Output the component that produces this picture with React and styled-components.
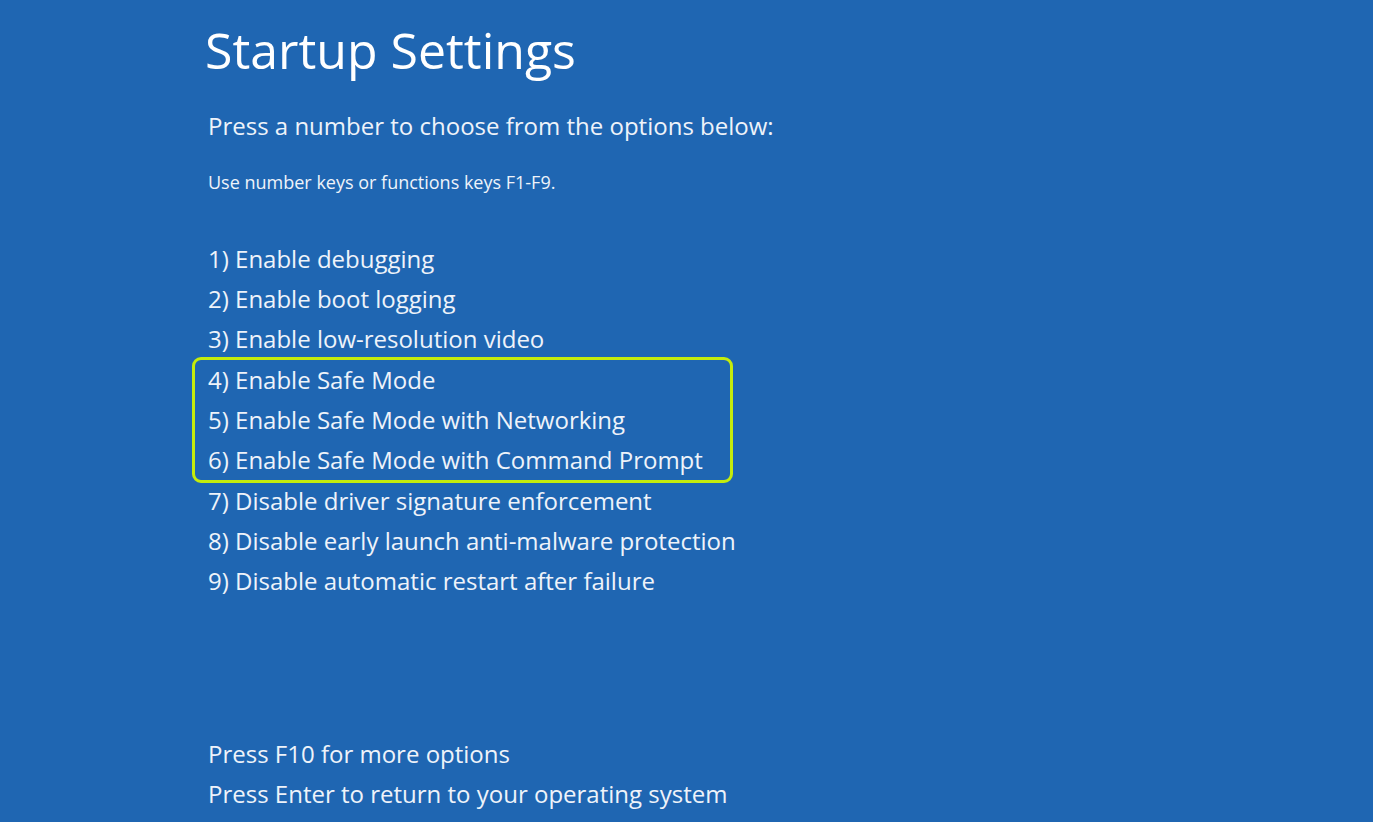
import React from "react";
import styled, { createGlobalStyle } from "styled-components";

const Global = createGlobalStyle`
  html, body { margin: 0; padding: 0; background: #1f66b2; }
  body { font-family: "Open Sans", "Noto Sans", sans-serif; color: #eef3fa; }
`;

const Screen = styled.div`
  width: 1373px;
  height: 822px;
  background: #1f66b2;
  box-sizing: border-box;
  padding: 18px 0 0 208px;
  display: flex;
  flex-direction: column;
  overflow: hidden;
`;

const Title = styled.h1`
  margin: 0 0 0 -3px;
  font-weight: 400;
  font-size: 50px;
  line-height: 64px;
  color: #ffffff;
`;

const Lead = styled.p`
  margin: 28px 0 0;
  font-size: 24px;
  line-height: 32px;
`;

const Hint = styled.p`
  margin: 29px 0 0;
  font-size: 18px;
  line-height: 22px;
`;

const OptionList = styled.ol`
  list-style: none;
  margin: 46px 0 0;
  padding: 0;
  display: flex;
  flex-direction: column;
`;

const Highlight = styled.div`
  margin: -2px 0 -2px -16px;
  width: 541px;
  box-sizing: border-box;
  border: 3px solid #c4ec0c;
  border-radius: 9px;
  padding: 0 0 0 13px;
`;

const Option = styled.li`
  font-size: 24px;
  line-height: 40px;
`;

const Footer = styled.div`
  margin-top: auto;
  padding-bottom: 8px;
  display: flex;
  flex-direction: column;
`;

const FooterLine = styled.p`
  margin: 0;
  font-size: 24px;
  line-height: 40px;
`;

const options = [
  "Enable debugging",
  "Enable boot logging",
  "Enable low-resolution video",
  "Enable Safe Mode",
  "Enable Safe Mode with Networking",
  "Enable Safe Mode with Command Prompt",
  "Disable driver signature enforcement",
  "Disable early launch anti-malware protection",
  "Disable automatic restart after failure",
];

export default function App() {
  const item = (text, i) => (
    <Option key={i}>
      {i + 1}) {text}
    </Option>
  );
  return (
    <>
      <Global />
      <Screen>
        <Title>Startup Settings</Title>
        <Lead>Press a number to choose from the options below:</Lead>
        <Hint>Use number keys or functions keys F1-F9.</Hint>
        <OptionList>
          {options.slice(0, 3).map((t, i) => item(t, i))}
          <Highlight>{options.slice(3, 6).map((t, i) => item(t, i + 3))}</Highlight>
          {options.slice(6).map((t, i) => item(t, i + 6))}
        </OptionList>
        <Footer>
          <FooterLine>Press F10 for more options</FooterLine>
          <FooterLine>Press Enter to return to your operating system</FooterLine>
        </Footer>
      </Screen>
    </>
  );
}
